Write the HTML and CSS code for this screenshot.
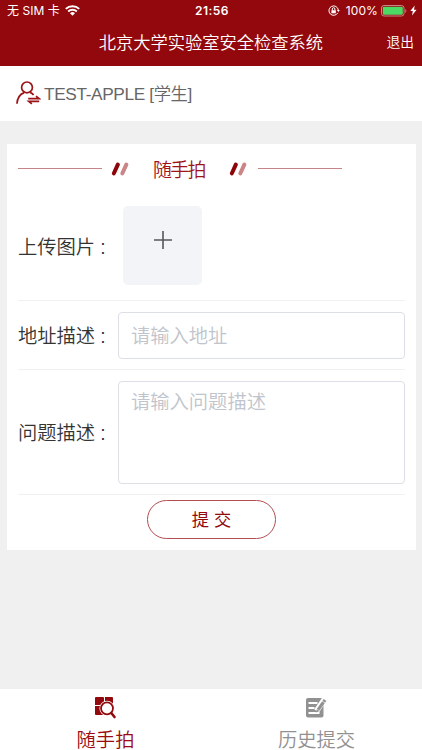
FILE: index.html
```html
<!DOCTYPE html>
<html lang="zh-CN">
<head>
<meta charset="utf-8">
<meta name="viewport" content="width=device-width">
<title>北京大学实验室安全检查系统</title>
<link rel="stylesheet" href="styles.css">
</head>
<body>
<header class="header">
  <div class="status">
    <div class="status-left"><span class="carrier">无 SIM 卡</span>
      <svg class="wifi" width="15" height="11" viewBox="0 0 15 11" fill="none" stroke="#fff" stroke-width="2"><path d="M.8 3.9a9.6 9.6 0 0 1 13.4 0M3.2 6.5a6.2 6.2 0 0 1 8.6 0"/><path d="M5 8.2a3.6 3.6 0 0 1 5 0L7.5 10.8z" fill="#fff" stroke="none"/></svg>
    </div>
    <span class="time">21:56</span>
    <div class="status-right">
      <svg width="12" height="12" viewBox="0 0 12 12" fill="none" stroke="#fff" stroke-width="1"><path d="M9.8 7.8A4.7 4.7 0 1 1 10.3 5"/><path d="M8.8 5h3l-1.4 2z" fill="#fff" stroke="none"/><path d="M3.4 5.2h4.4v3.1H3.4z" fill="#fff" stroke="none"/><path d="M4.3 5.3V4a1.3 1.3 0 0 1 2.6 0v1.3"/></svg>
      <span class="percent">100%</span>
      <svg class="battery" width="26" height="12" viewBox="0 0 26 12"><rect x=".5" y=".5" width="22.5" height="10.5" rx="2.5" fill="none" stroke="#ca8586"/><rect x="1.8" y="1.8" width="20" height="8" rx="1.3" fill="#4cd964"/><path d="M24.3 4v4q1-.4 1-2t-1-2z" fill="#ca8586"/></svg>
      <svg class="bolt" width="7" height="11" viewBox="0 0 7 11"><path d="M4.7.5.3 6.1h2.5L2 10.5l4.6-5.7H4z" fill="#fff"/></svg>
    </div>
  </div>
  <div class="titlebar"><span></span><h1>北京大学实验室安全检查系统</h1><a class="logout">退出</a></div>
</header>
<section class="user">
  <svg width="26" height="26" viewBox="0 0 26 26" fill="none" stroke="#9b1418" stroke-width="1.7"><circle cx="12" cy="7.4" r="5.4"/><path d="M2 23.8c.2-5.6 3.1-9.6 7.2-11.2M15 12.4c1.6.6 2.7 1.3 3.6 2.6"/><path d="M13.2 18.6H24l-3-2.4M24.2 21.4H13.8l3 2.4"/></svg>
  <span>TEST-APPLE [学生]</span>
</section>
<main class="card">
  <div class="heading">
    <i class="rule"></i>
    <svg width="18" height="15" viewBox="0 0 18 15" stroke-width="4" stroke-linecap="round"><path d="M2.9 11.3 6.8 2.6" stroke="#8e0509"/><path d="m11.4 11.3 3.9-8.7" stroke="#cb8587"/></svg>
    <h2>随手拍</h2>
    <svg width="18" height="15" viewBox="0 0 18 15" stroke-width="4" stroke-linecap="round"><path d="M2.9 11.3 6.8 2.6" stroke="#8e0509"/><path d="m11.4 11.3 3.9-8.7" stroke="#cb8587"/></svg>
    <i class="rule"></i>
  </div>
  <div class="row row-upload">
    <label>上传图片<b>:</b></label>
    <div class="upload"><svg width="20" height="20" viewBox="0 0 20 20" stroke="#56575a" stroke-width="1.6"><path d="M1 10h18M10 1v18"/></svg></div>
  </div>
  <div class="row row-address">
    <label>地址描述<b>:</b></label>
    <input class="field" placeholder="请输入地址">
  </div>
  <div class="row row-problem">
    <label>问题描述<b>:</b></label>
    <textarea class="field" placeholder="请输入问题描述"></textarea>
  </div>
  <button class="submit">提 交</button>
</main>
<nav class="tabs">
  <a class="tab active">
    <svg width="22" height="23" viewBox="0 0 22 23" fill="none"><path d="M2 1h7a1 1 0 0 1 1 1v7H1V2a1 1 0 0 1 1-1zM11 1h7a1 1 0 0 1 1 1v7h-8zM1 10h9v9H2a1 1 0 0 1-1-1zM11 10h8v9h-8z" fill="#920a0e"/><circle cx="13" cy="12.3" r="6.2" fill="#fff" stroke="#fff" stroke-width="2.8"/><circle cx="13" cy="12.3" r="6" fill="#fff" stroke="#920a0e" stroke-width="1.8"/><path d="m17.3 17 3.2 4" stroke="#920a0e" stroke-width="2.6" stroke-linecap="round"/></svg>
    <span>随手拍</span>
  </a>
  <a class="tab">
    <svg width="22" height="23" viewBox="0 0 22 23" fill="none"><rect x="1" y="2" width="17.5" height="19.5" rx="2" fill="#919191"/><path d="M3.5 7h9M3.5 12h6M3.5 17h11" stroke="#fff" stroke-width="1.8"/><path d="M19.4 3.2 11.6 14.9" stroke="#fff" stroke-width="5.6"/><path d="m20 4-6.8 9.6" stroke="#919191" stroke-width="3.2"/><path d="m11.8 13 2.7 1.9-3.3 1.5z" fill="#919191"/><path d="m17 5 3.2 2.2" stroke="#fff" stroke-width=".7"/></svg>
    <span>历史提交</span>
  </a>
</nav>
</body>
</html>
```
FILE: styles.css
```css
* { box-sizing: border-box; }
body {
  margin: 0;
  height: 750px;
  display: flex;
  flex-direction: column;
  overflow: hidden;
  background: #f0f0f0;
  color: #333;
  font-family: "Liberation Sans", "Noto Sans CJK SC", sans-serif;
  font-weight: 350;
}
h1, h2 { margin: 0; font-weight: 350; }
svg { display: block; flex: none; }

.header { height: 65.5px; flex: none; background: #93080c; color: #fff; }
.status {
  height: 21px;
  padding: 0 5px 0 7px;
  display: grid;
  grid-template-columns: 1fr auto 1fr;
  align-items: center;
  font: 12px/20px Inter, "Noto Sans CJK SC", sans-serif;
}
.status-left, .status-right { display: flex; align-items: center; }
.status-right { justify-content: flex-end; }
.carrier { letter-spacing: .05px; }
.wifi { margin-left: 5px; }
.time { font-weight: 600; letter-spacing: .5px; }
.percent { margin: 0 3px 0 6px; letter-spacing: .1px; }
.bolt { margin-left: 3px; }
.titlebar {
  height: 44px;
  padding: 0 8px;
  display: grid;
  grid-template-columns: 1fr auto 1fr;
  align-items: center;
}
.titlebar h1 { font-size: 17.25px; line-height: 44px; }
.logout { justify-self: end; font-size: 13.8px; line-height: 20px; }

.user {
  height: 55.5px;
  flex: none;
  padding: 0 0 1.5px 15px;
  display: flex;
  align-items: center;
  gap: 3px;
  background: #fff;
  color: #666;
  font-size: 17.25px;
  letter-spacing: -.37px;
}

.card {
  height: 406px;
  flex: none;
  margin: 23px 6px 0 7px;
  padding: 0 11px;
  background: #fff;
}
.heading { height: 50px; display: flex; align-items: center; }
.rule { width: 84px; height: 1px; background: #c58487; margin-top: -2px; }
.heading svg { margin-left: 9px; }
.heading h2 {
  width: 66px;
  margin: -1px 0 0 24px;
  color: #a01418;
  font-size: 19px;
  letter-spacing: -1.8px;
  white-space: nowrap;
}
.heading h2 + svg { margin: 0 11px 0 10px; }

.row {
  display: flex;
  align-items: center;
  border-bottom: 1px solid #f1f1f1;
}
.row-upload { height: 107px; padding-bottom: 3px; }
.row-address { height: 69px; }
.row-problem { height: 125px; }
.row label { width: 100px; flex: none; font-size: 19.3px; white-space: nowrap; }
.row label b { margin-left: 5px; font-weight: 400; }
.upload {
  width: 79px;
  height: 79px;
  margin: 0 0 0 5px;
  padding-bottom: 12px;
  display: flex;
  align-items: center;
  justify-content: center;
  border-radius: 5px;
  background: #f3f4f7;
}
.field {
  flex: 1;
  min-width: 0;
  height: 47px;
  padding: 3px 12px 0;
  border: 1px solid #dcdfe6;
  border-radius: 4px;
  background: #fff;
  font: 350 19.3px/28px "Liberation Sans", "Noto Sans CJK SC", sans-serif;
  resize: none;
}
.field::placeholder { color: #c0c4cc; opacity: 1; }
textarea.field { height: 103px; margin-top: 1px; padding-top: 7px; }
.submit {
  display: block;
  width: 129px;
  height: 39px;
  margin: 5px auto 0;
  padding: 0;
  border: 1px solid #b34e52;
  border-radius: 20px;
  background: #fff;
  color: #93080c;
  font: 17.25px/36px "Liberation Sans", "Noto Sans CJK SC", sans-serif;
}

.tabs {
  height: 61px;
  margin-top: auto;
  flex: none;
  display: grid;
  grid-template-columns: 1fr 1fr;
  background: #fff;
}
.tab {
  padding-top: 7px;
  display: flex;
  flex-direction: column;
  align-items: center;
  color: #919191;
  font-size: 19.3px;
  line-height: 20px;
}
.tab svg { margin-right: 1px; }
.tab span { margin-top: 12px; }
.active { color: #9b0b10; }
```
